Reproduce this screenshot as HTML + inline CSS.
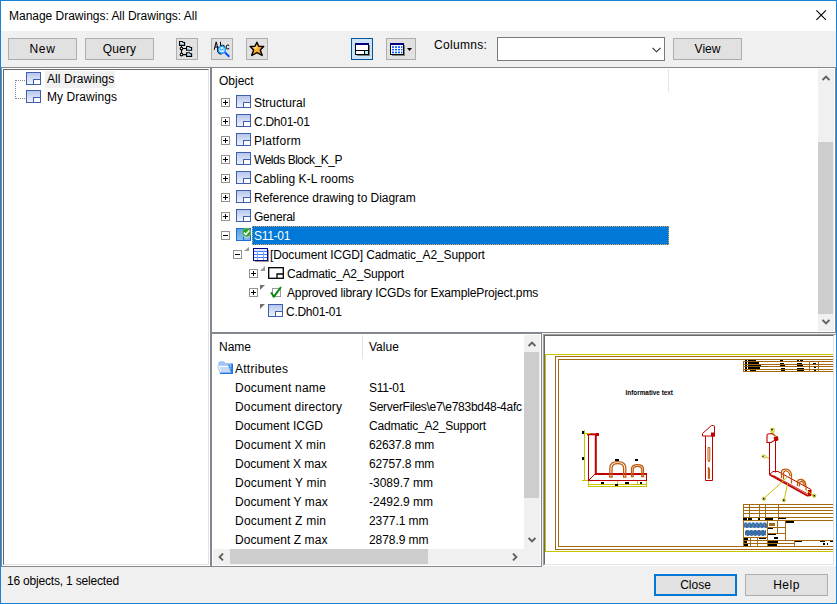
<!DOCTYPE html>
<html>
<head>
<meta charset="utf-8">
<title>Manage Drawings</title>
<style>
html,body{margin:0;padding:0;}
body{width:837px;height:604px;position:relative;overflow:hidden;background:#f0f0f0;
 font-family:"Liberation Sans",sans-serif;font-size:12px;color:#000;}
.a{position:absolute;}
.t{position:absolute;white-space:nowrap;line-height:19px;height:19px;margin-top:1px;}
.btn{position:absolute;box-sizing:border-box;background:#e1e1e1;border:1px solid #adadad;text-align:center;line-height:20px;height:22px;}
.ib{position:absolute;box-sizing:border-box;background:#e1e1e1;border:1px solid #adadad;width:22px;height:22px;top:38px;}
.pm{position:absolute;box-sizing:border-box;width:9px;height:9px;border:1px solid #919191;background:#fff;}
.pm:before{content:"";position:absolute;left:1px;top:3px;width:5px;height:1px;background:#000;}
.pm.p:after{content:"";position:absolute;left:3px;top:1px;width:1px;height:5px;background:#000;}
svg{position:absolute;overflow:visible;}
</style>
</head>
<body>

<svg width="0" height="0" style="position:absolute">
<defs>
<linearGradient id="dg" x1="0" y1="0" x2="0" y2="1"><stop offset="0" stop-color="#b4c4ea"/><stop offset="1" stop-color="#f0f4fd"/></linearGradient>
<symbol id="dwg" viewBox="0 0 15 13"><rect x="0.5" y="0.5" width="14" height="12" fill="url(#dg)" stroke="#3d5fae"/><rect x="7.5" y="7.5" width="7" height="5" fill="#fff" stroke="#3d5fae"/></symbol>
<linearGradient id="dgs" x1="0" y1="0" x2="0" y2="1"><stop offset="0" stop-color="#5a9ee6"/><stop offset="1" stop-color="#8cc0f0"/></linearGradient>
<symbol id="dwgs" viewBox="0 0 15 13"><rect x="0.5" y="0.5" width="14" height="12" fill="url(#dgs)" stroke="#1a6fd0"/><rect x="7.5" y="7.5" width="7" height="5" fill="#7ab4ee" stroke="#1a6fd0"/></symbol>
<symbol id="arrU" viewBox="0 0 8 6"><path d="M0.6 5L4 1.6L7.4 5" stroke="#606060" stroke-width="1.9" fill="none"/></symbol>
<symbol id="arrD" viewBox="0 0 8 6"><path d="M0.6 1L4 4.4L7.4 1" stroke="#606060" stroke-width="1.9" fill="none"/></symbol>
<symbol id="arrL" viewBox="0 0 6 8"><path d="M5 0.6L1.6 4L5 7.4" stroke="#606060" stroke-width="1.9" fill="none"/></symbol>
<symbol id="arrR" viewBox="0 0 6 8"><path d="M1 0.6L4.4 4L1 7.4" stroke="#606060" stroke-width="1.9" fill="none"/></symbol>
</defs>
</svg>
<!-- window frame -->
<div class="a" style="left:0;top:0;width:837px;height:31px;background:#fff;"></div>
<div class="t" id="title" style="left:9px;top:6px;letter-spacing:-0.02px;">Manage Drawings: All Drawings: All</div>
<svg style="left:816px;top:10px;" width="11" height="11" viewBox="0 0 11 11"><path d="M0.400 0.300L9.900 9.800M9.900 0.300L0.400 9.800" stroke="#000" stroke-width="1.100" fill="none"/></svg>

<!-- toolbar -->
<div class="btn" style="left:8px;top:38px;width:69px;letter-spacing:0.7px;">New</div>
<div class="btn" style="left:85px;top:38px;width:69px;letter-spacing:0.15px;">Query</div>
<div class="ib" style="left:176px;"></div>
<div class="ib" style="left:211px;"></div>
<div class="ib" style="left:246px;"></div>
<div class="ib" style="left:351px;background:#cce4f7;border-color:#005499;"></div>
<div class="ib" style="left:386px;width:30px;"></div>
<div class="t" style="left:434px;top:35px;letter-spacing:0.3px;">Columns:</div>
<div class="a" style="left:497px;top:37px;width:168px;height:24px;box-sizing:border-box;border:1px solid #7a7a7a;background:#fff;"></div>
<svg style="left:652px;top:47px;" width="9" height="6" viewBox="0 0 9 6"><path d="M0.500 0.800L4.500 4.800L8.500 0.800" stroke="#333" stroke-width="1.150" fill="none"/></svg>
<div class="btn" style="left:673px;top:38px;width:69px;">View</div>


<!-- toolbar icons -->
<svg style="left:179px;top:41px;" width="16" height="16" viewBox="0 0 16 16">
<g fill="#c4e6ff" stroke="#000" stroke-width="1.100" stroke-linejoin="miter">
<path d="M0.550 0.550H3.400L4.300 1.550H5.600V4.400H0.550Z"/>
<path d="M7.550 5.550H10.400L11.300 6.550H12.600V9.200H7.550Z"/>
<path d="M7.550 11.700H10.400L11.300 12.700H12.600V15.400H7.550Z"/>
</g>
<path d="M2.500 4.500V13M3.500 7.500H7.500M3.500 13.600H7.500" stroke="#000" stroke-width="1.200" fill="none"/>
<circle cx="2.500" cy="7.500" r="1.300" fill="#fff" stroke="#000" stroke-width="1.100"/><circle cx="2.500" cy="13.600" r="1.300" fill="#fff" stroke="#000" stroke-width="1.100"/>
</svg>
<svg style="left:213px;top:40px;" width="18" height="18" viewBox="0 0 18 18">
<g fill="none" stroke="#000" stroke-width="1">
<path d="M1.200 9.800L3.200 1.900L5.300 9.800M1.900 7H4.600"/>
<path d="M7.500 1.800V9.800"/><circle cx="9.400" cy="7.400" r="2.300"/>
<path d="M16.200 5.600Q14.800 4.400 13.600 5.500Q12.500 7 13.600 8.600Q14.800 9.600 16.200 8.500"/>
</g>
<circle cx="8.900" cy="9.900" r="4.300" fill="none" stroke="#000" stroke-width="1.300" stroke-dasharray="9.500 30" transform="rotate(95 8.900 9.900)"/>
<circle cx="8.900" cy="9.800" r="3.500" fill="#c4ecff" stroke="#169cff" stroke-width="1.500"/>
<path d="M7.200 8.700Q8.900 10.700 10.600 8.700" stroke="#1aa0ff" stroke-width="1.100" fill="none"/>
<circle cx="8.900" cy="8.300" r="1" fill="#fff"/>
<path d="M12 12.500L16.300 16.700" stroke="#0048ff" stroke-width="1.900" fill="none"/>
</svg>
<svg style="left:249px;top:41px;" width="16" height="16" viewBox="0 0 16 16">
<defs><radialGradient id="sg" cx="0.380" cy="0.380" r="0.700"><stop offset="0" stop-color="#ffe9a8"/><stop offset="0.250" stop-color="#ffb634"/><stop offset="1" stop-color="#e88c10"/></radialGradient></defs>
<path d="M7.900 1.200L9.800 5.300L14.700 5.500L11.300 9L13.200 14.500L8 11.700L2.700 14.500L4.600 9L1.200 5.500L6 5.300Z" fill="url(#sg)" stroke="#000" stroke-width="1.400" stroke-linejoin="round"/>
</svg>
<svg style="left:355px;top:43px;" width="15" height="13" viewBox="0 0 15 13" shape-rendering="crispEdges">
<rect x="2" y="2" width="13" height="11" fill="#808080"/>
<rect x="0.500" y="0.500" width="13" height="11" fill="#fff" stroke="#000"/>
<rect x="0" y="0" width="14" height="2" fill="#000080"/>
<path d="M1 7.500H13M9.500 8V11" stroke="#000" fill="none"/>
<rect x="10" y="8" width="3" height="3" fill="#b8f0f8"/>
</svg>
<svg style="left:390px;top:43px;" width="15" height="13" viewBox="0 0 15 13" shape-rendering="crispEdges">
<rect x="2" y="2" width="13" height="11" fill="#808080"/>
<rect x="0.500" y="0.500" width="13" height="11" fill="#fff" stroke="#000"/>
<rect x="0" y="0" width="14" height="2" fill="#000080"/>
<g fill="#0a5cff" shape-rendering="auto"><rect x="2" y="3.2" width="2" height="1.7"/><rect x="5" y="3.2" width="2" height="1.7"/><rect x="8" y="3.2" width="2" height="1.7"/><rect x="11" y="3.2" width="1.4" height="1.7"/><rect x="2" y="5.9" width="2" height="1.5"/><rect x="5" y="5.9" width="2" height="1.5"/><rect x="8" y="5.9" width="2" height="1.5"/><rect x="11" y="5.9" width="1.4" height="1.5"/><rect x="2" y="8.6" width="2" height="1.7"/><rect x="5" y="8.6" width="2" height="1.7"/><rect x="8" y="8.6" width="2" height="1.7"/><rect x="11" y="8.6" width="1.4" height="1.7"/></g>
</svg>
<svg style="left:407px;top:48px;" width="5" height="3" viewBox="0 0 5 3"><path d="M0 0H5L2.500 3Z" fill="#000"/></svg>

<!-- left panel -->
<div class="a" style="left:1px;top:67px;width:210px;height:500px;box-sizing:border-box;border:1px solid #828790;background:#fff;"></div>
<div class="a" style="left:3px;top:69px;width:206px;height:496px;box-sizing:border-box;border:1px solid #e3e3e3;border-top-color:#696969;border-left-color:#696969;background:#fff;"></div>

<!-- tree panel -->
<div class="a" id="treep" style="left:210px;top:67px;width:626px;height:266px;box-sizing:border-box;border:1px solid #828790;border-left-width:2px;background:#fff;"></div>


<!-- left tree content -->
<div class="a" style="left:45px;top:71px;width:70px;height:17px;background:#f0f0f0;"></div>
<svg style="left:15px;top:80px;" width="11" height="19" viewBox="0 0 11 19" shape-rendering="crispEdges"><path d="M0.5 0.5H11M0.5 18.5H11" stroke="#808080" stroke-dasharray="1 1" fill="none"/><path d="M0.5 0V19" stroke="#808080" stroke-dasharray="1 1" fill="none"/></svg>
<svg style="left:26px;top:72px;" width="15" height="13"><use href="#dwg"/></svg>
<svg style="left:26px;top:90px;" width="15" height="13"><use href="#dwg"/></svg>
<div class="t" style="left:47px;top:71px;line-height:17px;height:17px;margin-top:0;letter-spacing:0.06px;">All Drawings</div>
<div class="t" style="left:47px;top:89px;line-height:17px;height:17px;margin-top:0;letter-spacing:0.06px;">My Drawings</div>

<!-- main tree content -->
<div class="t" style="left:219px;top:71px;">Object</div>
<div class="a" style="left:668px;top:69px;width:1px;height:23px;background:#e5e5e5;"></div>
<div class="pm p" style="left:221px;top:98px;"></div><svg style="left:236px;top:95px;" width="15" height="13"><use href="#dwg"/></svg><div class="t" style="left:254px;top:93px;">Structural</div>
<div class="pm p" style="left:221px;top:117px;"></div><svg style="left:236px;top:114px;" width="15" height="13"><use href="#dwg"/></svg><div class="t" style="left:254px;top:112px;letter-spacing:-0.27px;">C.Dh01-01</div>
<div class="pm p" style="left:221px;top:136px;"></div><svg style="left:236px;top:133px;" width="15" height="13"><use href="#dwg"/></svg><div class="t" style="left:254px;top:131px;letter-spacing:0.29px;">Platform</div>
<div class="pm p" style="left:221px;top:155px;"></div><svg style="left:236px;top:152px;" width="15" height="13"><use href="#dwg"/></svg><div class="t" style="left:254px;top:150px;letter-spacing:-0.47px;">Welds Block_K_P</div>
<div class="pm p" style="left:221px;top:174px;"></div><svg style="left:236px;top:171px;" width="15" height="13"><use href="#dwg"/></svg><div class="t" style="left:254px;top:169px;letter-spacing:0.07px;">Cabling K-L rooms</div>
<div class="pm p" style="left:221px;top:193px;"></div><svg style="left:236px;top:190px;" width="15" height="13"><use href="#dwg"/></svg><div class="t" style="left:254px;top:188px;letter-spacing:-0.04px;">Reference drawing to Diagram</div>
<div class="pm p" style="left:221px;top:212px;"></div><svg style="left:236px;top:209px;" width="15" height="13"><use href="#dwg"/></svg><div class="t" style="left:254px;top:207px;letter-spacing:-0.24px;">General</div>
<div class="a" style="left:252px;top:226px;width:417px;height:19px;background:#0078d7;box-sizing:border-box;border:1px dotted #e8a060;"></div>
<div class="pm" style="left:221px;top:231px;"></div><svg style="left:236px;top:228px;" width="15" height="13"><use href="#dwgs"/></svg>
<svg style="left:241px;top:227px;" width="11" height="11" viewBox="0 0 11 11"><ellipse cx="5.500" cy="7.200" rx="3.600" ry="3.400" fill="#e4f0fb"/><circle cx="5.500" cy="5.500" r="4.400" fill="#2f9f2f" stroke="#8fd08f" stroke-width="0.600"/><path d="M2.8 5.6L4.8 7.6L8.3 3.4" stroke="#fff" stroke-width="1.5" fill="none"/></svg>
<div class="t" style="left:254px;top:226px;color:#fff;letter-spacing:-0.3px;">S11-01</div>
<div class="pm" style="left:233px;top:250px;"></div>
<svg style="left:244px;top:247px;" width="5" height="4" viewBox="0 0 5 4"><path d="M5 0V4H0Z" fill="#9a9a9a"/></svg>
<svg style="left:253px;top:248px;" width="16" height="14" viewBox="0 0 16 14" shape-rendering="crispEdges"><rect x="2" y="2" width="14" height="12" fill="#9a9a9a"/><rect x="0.5" y="0.5" width="14" height="12" fill="#fff" stroke="#000080"/><path d="M1 3.500H14M1 6.500H14M1 9.500H14" stroke="#3f7dff" fill="none"/><path d="M4.500 1V12M10.500 1V12" stroke="#7aa6ff" fill="none"/><rect x="1" y="1" width="13" height="2" fill="#dfe8ff"/></svg>
<div class="t" style="left:270px;top:245px;letter-spacing:-0.115px;">[Document ICGD] Cadmatic_A2_Support</div>
<div class="pm p" style="left:249px;top:269px;"></div>
<svg style="left:260px;top:266px;" width="5" height="5" viewBox="0 0 5 5"><path d="M5 0V5H0Z" fill="#9a9a9a"/></svg>
<svg style="left:268px;top:267px;" width="16" height="12" viewBox="0 0 16 12"><rect x="0.700" y="0.700" width="14.600" height="10.600" fill="#fff" stroke="#000" stroke-width="1.300"/><path d="M9 11V7H15" stroke="#000" stroke-width="1.300" fill="none"/></svg>
<div class="t" style="left:287px;top:264px;letter-spacing:-0.2px;">Cadmatic_A2_Support</div>
<div class="pm p" style="left:249px;top:288px;"></div>
<svg style="left:260px;top:285px;" width="5" height="5" viewBox="0 0 5 5"><path d="M0 0H5L0 5Z" fill="#707070"/></svg>
<svg style="left:270px;top:286px;" width="13" height="12" viewBox="0 0 13 12"><rect x="2.5" y="2.5" width="8" height="8" fill="#fff" stroke="#9a9a9a"/><path d="M1 6.5L4 10.5L11 1" stroke="#0a8a0a" stroke-width="2" fill="none"/></svg>
<div class="t" style="left:287px;top:283px;letter-spacing:-0.14px;">Approved library ICGDs for ExampleProject.pms</div>
<svg style="left:260px;top:304px;" width="5" height="5" viewBox="0 0 5 5"><path d="M0 0H5L0 5Z" fill="#707070"/></svg>
<svg style="left:268px;top:304px;" width="15" height="13"><use href="#dwg"/></svg>
<div class="t" style="left:286px;top:302px;letter-spacing:-0.27px;">C.Dh01-01</div>
<div class="a" style="left:818px;top:69px;width:16px;height:262px;background:#f0f0f0;"></div>
<div class="a" style="left:818px;top:142px;width:15px;height:172px;background:#cdcdcd;"></div>
<svg style="left:822px;top:75px;" width="8" height="6"><use href="#arrU"/></svg>
<svg style="left:822px;top:319px;" width="8" height="6"><use href="#arrD"/></svg>

<!-- attr panel -->
<div class="a" id="attrp" style="left:210px;top:333px;width:332px;height:234px;box-sizing:border-box;border:1px solid #828790;border-left-width:2px;background:#fff;"></div>


<!-- attr content -->
<div class="a" style="left:212px;top:334px;width:312px;height:215px;overflow:hidden;">
<div class="t" style="left:7px;top:3px;">Name</div>
<div class="t" style="left:157px;top:3px;">Value</div>
<div class="a" style="left:150px;top:1px;width:1px;height:24px;background:#e5e5e5;"></div>
<svg style="left:5px;top:27px;" width="16" height="13" viewBox="0 0 16 13">
<path d="M1.3 2.200Q1.300 0.200 3.500 0.200H6.800L8.400 2H14Q15 2 15 3V12.500H3L1.300 7Z" fill="#9fc3f3"/>
<rect x="14.300" y="2.600" width="1.700" height="10.400" fill="#1b74e4"/>
<rect x="3" y="11.400" width="13" height="1.600" fill="#1b74e4"/>
<path d="M0.200 4.800H11.800L14.200 11.400H3.200Z" fill="#c4d9f8"/>
<path d="M1.600 5.400H11.200M1.700 5.600L3.600 10.600" stroke="#fff" stroke-width="1" fill="none"/><path d="M0.500 5L3 11.400" stroke="#b4cef6" stroke-width="0.9" fill="none"/>
<path d="M11.900 3.800L14.400 11" stroke="#1b74e4" stroke-width="1.500" stroke-dasharray="1.600 0.700" fill="none"/>
</svg>
<div class="t" style="left:23px;top:25px;letter-spacing:0.26px;">Attributes</div>
<div class="t" style="left:23px;top:44px;letter-spacing:0.22px;">Document name</div>
<div class="t" style="left:157px;top:44px;letter-spacing:-0.3px;">S11-01</div>
<div class="t" style="left:23px;top:63px;letter-spacing:0.17px;">Document directory</div>
<div class="t" style="left:157px;top:63px;letter-spacing:-0.29px;">ServerFiles\e7\e783bd48-4afc</div>
<div class="t" style="left:23px;top:82px;">Document ICGD</div>
<div class="t" style="left:157px;top:82px;letter-spacing:-0.2px;">Cadmatic_A2_Support</div>
<div class="t" style="left:23px;top:101px;letter-spacing:0.16px;">Document X min</div>
<div class="t" style="left:157px;top:101px;letter-spacing:-0.15px;">62637.8 mm</div>
<div class="t" style="left:23px;top:120px;">Document X max</div>
<div class="t" style="left:157px;top:120px;letter-spacing:-0.15px;">62757.8 mm</div>
<div class="t" style="left:23px;top:139px;letter-spacing:0.23px;">Document Y min</div>
<div class="t" style="left:157px;top:139px;">-3089.7 mm</div>
<div class="t" style="left:23px;top:158px;letter-spacing:0.08px;">Document Y max</div>
<div class="t" style="left:157px;top:158px;">-2492.9 mm</div>
<div class="t" style="left:23px;top:177px;letter-spacing:0.23px;">Document Z min</div>
<div class="t" style="left:157px;top:177px;letter-spacing:-0.06px;">2377.1 mm</div>
<div class="t" style="left:23px;top:196px;letter-spacing:0.08px;">Document Z max</div>
<div class="t" style="left:157px;top:196px;letter-spacing:-0.06px;">2878.9 mm</div>
</div>
<div class="a" style="left:524px;top:335px;width:16px;height:214px;background:#f0f0f0;"></div>
<div class="a" style="left:524px;top:352px;width:15px;height:146px;background:#cdcdcd;"></div>
<svg style="left:528px;top:341px;" width="8" height="6"><use href="#arrU"/></svg>
<svg style="left:528px;top:537px;" width="8" height="6"><use href="#arrD"/></svg>
<div class="a" style="left:213px;top:549px;width:327px;height:16px;background:#f0f0f0;"></div>
<div class="a" style="left:230px;top:549px;width:198px;height:15px;background:#cdcdcd;"></div>
<svg style="left:218px;top:553px;" width="6" height="8"><use href="#arrL"/></svg>
<svg style="left:512px;top:553px;" width="6" height="8"><use href="#arrR"/></svg>

<!-- preview panel -->
<div class="a" id="prevp" style="left:543px;top:334px;width:293px;height:232px;box-sizing:border-box;background:#fff;border-top:1px solid #a0a0a0;border-left:1px solid #a0a0a0;border-bottom:1px solid #fff;"></div>
<div class="a" style="left:544px;top:335px;width:290px;height:230px;box-sizing:border-box;background:#fff;border-top:1px solid #696969;border-left:1px solid #696969;border-right:1px solid #e3e3e3;border-bottom:1px solid #e3e3e3;"></div>


<!-- preview drawing -->
<svg style="left:545px;top:336px;overflow:hidden;" width="288" height="228" viewBox="545 336 288 228">
<g fill="none" shape-rendering="crispEdges">
<path d="M545.500 552V354.500H840" stroke="#c4c400"/>
<path d="M545 551.5H840" stroke="#c4c400"/>
<path d="M555.5 549.5V356.5H840M555 549.5H840" stroke="#a46a10"/>
<path d="M558.5 546.5V359.5H840M558 546.5H840" stroke="#a46a10"/>
<!-- top-right table -->
<path d="M743.5 361V372M809.500 361V372M818.500 361V372M743 361.500H840M743 364.500H840M743 366.500H840M743 369.500H840M743 371.500H840" stroke="#a46a10"/>
<!-- title block -->
<path d="M743 504.500H840M743 507.500H840M743 510.500H840M743 513.500H840M743 517.500H840M743 520.500H840" stroke="#a46a10"/>
<path d="M743.500 504V546M749.500 504V520M759.500 504V520M765.500 504V520M778.500 504V520" stroke="#a46a10"/>
<path d="M767.500 520V546M777.500 520V533M785.500 520V541M767 527.500H785M767 533.500H785M767 540.500H840M743 543.500H795M794.500 540V546" stroke="#a46a10"/>
<path d="M743 537.500H767M743 540.500H767M750.500 537V546M757.500 537V546" stroke="#a46a10"/>
</g>
<!-- text smudges -->
<g fill="#000" shape-rendering="crispEdges">
<rect x="745" y="360" width="1.500" height="11"/><rect x="748" y="360" width="8" height="1.500"/><rect x="748" y="362" width="11" height="2"/><rect x="748" y="365" width="13" height="1.500"/><rect x="762" y="365.500" width="6" height="1"/><rect x="748" y="367" width="12" height="2"/><rect x="750" y="369.500" width="6" height="1.500"/>
<rect x="780" y="360" width="3" height="1.500"/><rect x="780" y="363" width="4" height="1"/><rect x="780" y="365" width="5" height="2"/><rect x="781" y="367.500" width="4" height="3"/>
<rect x="797" y="360" width="2" height="2"/><rect x="800" y="360" width="3" height="2"/><rect x="797" y="362.500" width="5" height="2"/><rect x="797" y="365" width="6" height="2"/><rect x="797" y="367.500" width="7" height="3"/>
<rect x="811" y="360.500" width="3" height="1.500"/><rect x="813" y="363" width="3" height="1.500"/><rect x="814" y="365.500" width="2" height="2"/><rect x="814" y="369" width="1.500" height="2"/>
<rect x="743" y="518" width="4" height="1.500"/><rect x="748" y="518" width="4" height="1.500"/><rect x="758" y="518" width="2" height="1.500"/><rect x="765" y="518" width="8" height="1.500"/><rect x="778" y="518" width="8" height="1"/>
<rect x="786" y="521" width="8" height="2"/>
<rect x="768" y="528" width="5" height="1"/><rect x="768" y="534" width="8" height="1"/><rect x="774" y="537" width="4" height="2"/>
<rect x="768" y="541" width="10" height="1.500"/><rect x="768" y="544" width="9" height="1.500"/>
<rect x="744" y="538" width="4" height="1.500"/><rect x="744" y="541" width="3" height="1.500"/><rect x="744" y="544" width="4" height="1.500"/><rect x="759" y="538" width="7" height="1"/>
<rect x="795" y="541" width="7" height="1"/><rect x="820" y="541" width="5" height="1"/><rect x="823" y="543" width="2" height="2"/><rect x="827" y="543" width="1" height="2"/><rect x="830" y="541" width="3" height="1"/>
</g>
<path d="M743.500 361V372M809.500 361V372M818.500 361V372M743 361.500H840M743 364.500H840M743 366.500H840M743 369.500H840M743 371.500H840" stroke="#a46a10" stroke-opacity="0.850" fill="none" shape-rendering="crispEdges"/>
<rect x="744" y="522.500" width="23" height="5.500" fill="#3a6ea5"/><rect x="745" y="530" width="21" height="6" fill="#3a6ea5"/>
<path d="M744 522.800H767" stroke="#fff" stroke-width="1.200" stroke-dasharray="1.500 2.300" stroke-dashoffset="1"/>
<path d="M745 525.200H767" stroke="#9cb8d8" stroke-width="0.800" stroke-dasharray="1 2.800"/>
<path d="M744 528H767" stroke="#fff" stroke-width="1" stroke-dasharray="2 1.800"/>
<path d="M745 530.200H766" stroke="#fff" stroke-width="1" stroke-dasharray="1.200 2.600"/>
<path d="M745 535.800H766" stroke="#fff" stroke-width="1" stroke-dasharray="1.800 2"/>
<rect x="769" y="523" width="6" height="3" fill="#a46a10"/>
<text x="625.500" y="395.200" font-family="Liberation Sans" font-size="7.6" font-weight="bold" fill="#000" textLength="47.5" lengthAdjust="spacingAndGlyphs">Informative text</text>
<!-- L bracket -->
<g fill="none" stroke="#c00000">
<path d="M588.5 434V480.500H646.500V473" stroke-width="1" shape-rendering="crispEdges"/>
<path d="M595.800 434V474" stroke-width="2"/>
<path d="M587 434.300H599" stroke-width="2"/><rect x="596" y="433" width="3" height="3" fill="#c00000" stroke="none"/>
<path d="M595 474H646.500" stroke-width="2"/>
<path d="M589 480L595 474" stroke-width="1"/>
</g>
<g fill="none" stroke="#c4c400" shape-rendering="crispEdges">
<path d="M584.500 430V481M582 433.500H590M582 480.500H588"/>
<path d="M588.500 481V487M646.500 481V487M588 484.500H646M588 486.500H646M617.500 481V485M637.500 481V485"/>
</g>
<g fill="none" stroke="#c05a08" stroke-width="1.25">
<path d="M609.800 477V468Q609.800 461.500 617.800 461.500Q625.800 461.500 625.800 468V477H623.600V468.500Q623.600 463.600 617.800 463.600Q612 463.600 612 468.500V477Z"/>
<path d="M631.500 476.500V469Q631.500 464.500 637.500 464.500Q643.500 464.500 643.500 469V476.500H641.800V469.500Q641.800 466.300 637.500 466.300Q633.200 466.300 633.200 469.500V476.500Z"/>
</g>
<g fill="#000" shape-rendering="crispEdges">
<rect x="582" y="431" width="2" height="3"/><rect x="582" y="457" width="2" height="3"/><rect x="615" y="459" width="4" height="2"/><rect x="635" y="459" width="3" height="2"/>
<rect x="601" y="482" width="3" height="2"/><rect x="625" y="482" width="4" height="2"/><rect x="640" y="482" width="2" height="2"/><rect x="615" y="484" width="3" height="2"/>
</g>
<!-- middle piece -->
<g fill="none" stroke="#c00000" stroke-width="1">
<path d="M705.500 436V480.500H712.500V436"/>
<path d="M702.500 436V433.500L711.500 425.500H713.500Q714.500 425.500 714.500 427V436Z"/>
<rect x="711.500" y="433" width="3" height="3" fill="#c00000"/>
</g>
<g fill="none" stroke="#c05a08" stroke-width="1">
<path d="M708 447.500H709.800V460L708.900 462L708 460Z"/>
<path d="M708.300 467V478.500H709.500V469Z" fill="#c05a08"/>
</g>
<!-- right iso piece -->
<g fill="none" stroke="#c00000" stroke-width="1">
<path d="M769.500 442V474.500M775.500 440V472.500"/>
<path d="M768 434Q767 434 767 435.500V442.500H771L776 439.500L775.500 436L772 433.500Z" stroke-width="1.1"/>
<path d="M774 437.500L777.500 436.500L778 440L775 441Z" fill="#c00000"/>
<path d="M769.500 474.500L773 471.500H778L811 489.500V495.500L808 496"/>
<path d="M769.500 474.500L808 496" stroke-width="2"/>
<path d="M773.500 475.500L809 494.500" stroke-width="0.8"/>
<rect x="808" y="490" width="3" height="6" fill="#c00000" stroke="none"/>
</g>
<g fill="none" stroke="#c05a08" stroke-width="1.25">
<path d="M781.500 478V472.500Q781.500 469 785.500 469Q790.500 469 791.500 474.500V483.500M783.500 479.500V473Q784 470.500 786.500 471Q789.500 472 790 476"/>
<path d="M797.500 486V482Q798 479 801.500 479.500Q805.500 480.500 806 486V490M799.500 486.500V483Q800 481 802 481.500Q804 482.500 804.500 486.500" stroke-width="1.3"/>
</g>
<g fill="none" stroke="#c4c400" stroke-width="1">
<path d="M788 476.500L765 497.500M787.500 484L784.500 498.500M806 490L813 495"/>
<circle cx="763.800" cy="498.800" r="1.600"/><circle cx="783.800" cy="500.300" r="1.600"/><circle cx="814.300" cy="495.800" r="1.600"/>
<path d="M776 437L773 432.500M769 458.500L766 457"/>
<rect x="771" y="428.500" width="3" height="3.500"/><ellipse cx="764" cy="456.500" rx="1.800" ry="1.500"/>
</g>
<g fill="#000"><rect x="771.300" y="429" width="1.500" height="1.500"/><rect x="762.500" y="455.800" width="1.200" height="1.200"/><rect x="763" y="498" width="1.500" height="1.500"/><rect x="783" y="499.500" width="1.500" height="1.500"/><rect x="813.500" y="495" width="1.500" height="1.500"/></g>
</svg>

<!-- bottom -->
<div class="t" style="left:7px;top:571px;letter-spacing:-0.19px;">16 objects, 1 selected</div>
<div class="btn" style="left:654px;top:574px;width:83px;border:2px solid #0078d7;line-height:18px;">Close</div>
<div class="btn" style="left:745px;top:574px;width:83px;letter-spacing:0.5px;">Help</div>

<!-- frame border on top -->
<div class="a" style="left:0;top:0;width:837px;height:604px;box-sizing:border-box;border:1px solid #1883d7;pointer-events:none;"></div>
</body>
</html>
